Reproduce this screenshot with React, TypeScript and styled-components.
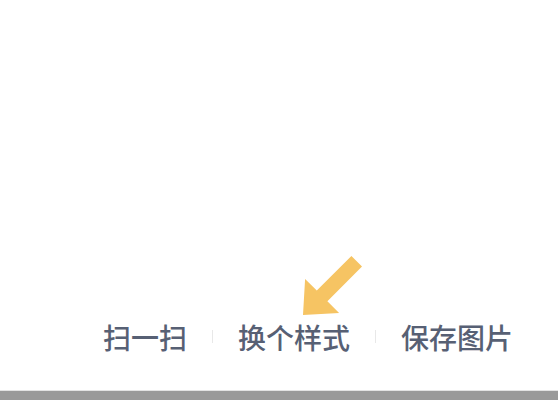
import React from 'react';
import styled, { createGlobalStyle } from 'styled-components';

const GlobalStyle = createGlobalStyle`
    html, body, #root {
        margin: 0;
        padding: 0;
        height: 100%;
        background: #fff;
    }
    body {
        font-family: "Noto Sans CJK SC", "Noto Sans", sans-serif;
    }
`;

const actions = ['扫一扫', '换个样式', '保存图片'];

const App: React.FC = () => {
    return (
        <>
            <GlobalStyle />
            <Page>
                <Blank />
                <ActionBar>
                    {actions.map((label, i) => (
                        <React.Fragment key={label}>
                            {i > 0 && <Divider />}
                            <ActionButton>{label}</ActionButton>
                        </React.Fragment>
                    ))}
                </ActionBar>
                <BottomSpace />
                <DockBar />
                <HintArrow viewBox="0 0 80 80" width="80" height="80">
                    <path
                        d="M13 70 L15.1 33.9 L26.8 45.6 L61.4 11 L72 21.6 L37.4 56.2 L49.1 67.9 Z"
                        fill="#f6c463"
                    />
                </HintArrow>
            </Page>
        </>
    );
};

const Page = styled.div`
    position: relative;
    width: 100%;
    height: 100vh;
    display: flex;
    flex-direction: column;
    overflow: hidden;
`;

const Blank = styled.div`
    flex: 1;
    height: 0;
`;

const ActionBar = styled.div`
    height: 57px;
    display: flex;
    flex-direction: row;
    align-items: center;
    justify-content: flex-end;
    padding-right: 45px;
`;

const ActionButton = styled.span`
    font-size: 28px;
    line-height: 1;
    font-weight: 500;
    color: #576074;
    white-space: nowrap;
    cursor: pointer;
`;

const Divider = styled.span`
    width: 1px;
    height: 13px;
    margin: 0 25px;
    background-color: #e8e8e8;
`;

const BottomSpace = styled.div`
    height: 25px;
    border-bottom: 1px solid #e2e2e2;
`;

const DockBar = styled.div`
    height: 9px;
    background-color: #999;
`;

const HintArrow = styled.svg`
    position: absolute;
    left: 290px;
    top: 245px;
`;

export default App;
